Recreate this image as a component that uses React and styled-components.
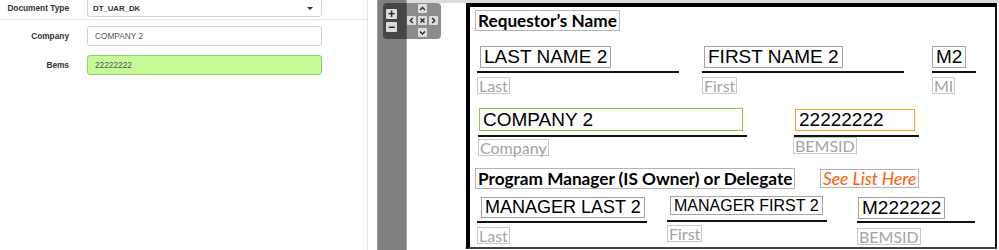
import React from "react";
import styled, { createGlobalStyle } from "styled-components";

const GlobalStyle = createGlobalStyle`
  html, body {
    margin: 0;
    padding: 0;
    background: #fff;
    overflow: hidden;
  }
  body {
    font-family: "Liberation Sans", Arial, sans-serif;
  }
`;

const fields = [
  { x: 7, y: 39, inset: 3, h: 22, line: 202, gap1: 3, gap2: 4, value: "LAST NAME 2", label: "Last" },
  { x: 232, y: 39, inset: 2, h: 22, line: 202, gap1: 3, gap2: 4, value: "FIRST NAME 2", label: "First" },
  { x: 462, y: 39, inset: 0, h: 22, line: 44, gap1: 3, gap2: 4, value: "M2", label: "MI" },
  { x: 8, y: 101, inset: 1, h: 23, w: 264, line: 269, gap1: 4, gap2: 2, value: "COMPANY 2", label: "Company", tone: "green" },
  { x: 324, y: 102, inset: 1, h: 22, w: 120, line: 125, gap1: 4, gap2: 0, labelInset: -1, value: "22222222", label: "BEMSID", tone: "orange" },
  { x: 7, y: 190, inset: 4, h: 21, line: 170, gap1: 3, gap2: 4, size: 18, value: "MANAGER LAST 2", label: "Last" },
  { x: 197, y: 189, inset: 3, h: 19, line: 160, gap1: 5, gap2: 3, size: 16, value: "MANAGER FIRST 2", label: "First" },
  { x: 387, y: 190, inset: 1, h: 22, line: 118, gap1: 2, gap2: 5, value: "M222222", label: "BEMSID" }
];

const toneColor = {
  plain: "#a3a3a3",
  green: "#8cc63f",
  orange: "#f5a21c"
};

function Chevron({ dir }) {
  const paths = {
    up: "M2 6 L4.5 3.5 L7 6",
    down: "M2 3.5 L4.5 6 L7 3.5",
    left: "M5.8 2 L3.3 4.5 L5.8 7",
    right: "M3.2 2 L5.7 4.5 L3.2 7",
    close: "M2.5 2.5 L6.5 6.5 M6.5 2.5 L2.5 6.5"
  };
  return (
    <svg width="9" height="9" viewBox="0 0 9 9">
      <path d={paths[dir]} fill="none" stroke="#2a2a2a" strokeWidth="1.4" />
    </svg>
  );
}

export default function App() {
  return (
    <Shell>
      <GlobalStyle />
      <FormPanel>
        <TopRow>
          <FieldLabel>Document Type</FieldLabel>
          <Select>
            <span>DT_UAR_DK</span>
            <Caret />
          </Select>
        </TopRow>
        <Divider />
        <Row $mt={6}>
          <FieldLabel>Company</FieldLabel>
          <Input>COMPANY 2</Input>
        </Row>
        <Row $mt={9}>
          <FieldLabel>Bems</FieldLabel>
          <Input $valid>22222222</Input>
        </Row>
      </FormPanel>
      <Gutter />
      <ThumbBar />
      <Viewer>
        <Page>
          <Heading $x={5} $y={3}>Requestor’s Name</Heading>
          <Heading $x={5} $y={161}>Program Manager (IS Owner) or Delegate</Heading>
          <Heading $x={350} $y={162} $link>See List Here</Heading>
          {fields.map((f, i) => (
            <FieldGroup key={i} $x={f.x} $y={f.y}>
              <ValueBox
                $inset={f.inset}
                $h={f.h}
                $w={f.w}
                $size={f.size || 19}
                $tone={f.tone || "plain"}
              >
                {f.value}
              </ValueBox>
              <Rule $w={f.line} $gap={f.gap1} />
              <Caption $gap={f.gap2} $inset={f.labelInset || 0}>
                {f.label}
              </Caption>
            </FieldGroup>
          ))}
        </Page>
      </Viewer>
      <NavOverlay>
        <ZoomCol>
          <ZoomBtn>+</ZoomBtn>
          <ZoomBtn>−</ZoomBtn>
        </ZoomCol>
        <ArrowGrid>
          <span />
          <ArrowBtn><Chevron dir="up" /></ArrowBtn>
          <span />
          <ArrowBtn><Chevron dir="left" /></ArrowBtn>
          <ArrowBtn><Chevron dir="close" /></ArrowBtn>
          <ArrowBtn><Chevron dir="right" /></ArrowBtn>
          <span />
          <ArrowBtn><Chevron dir="down" /></ArrowBtn>
          <span />
        </ArrowGrid>
      </NavOverlay>
    </Shell>
  );
}

const Shell = styled.div`
  position: relative;
  display: flex;
  width: 999px;
  height: 250px;
  overflow: hidden;
`;

const FormPanel = styled.div`
  width: 367px;
  flex-shrink: 0;
  border-right: 1px solid #e4e4e4;
  background: #fff;
`;

const TopRow = styled.div`
  display: flex;
  align-items: flex-start;
  height: 19px;
`;

const Row = styled.div`
  display: flex;
  align-items: center;
  height: 20px;
  margin-top: ${p => p.$mt}px;
`;

const FieldLabel = styled.div`
  width: 69px;
  margin-right: 18px;
  text-align: right;
  font-size: 8.3px;
  font-weight: bold;
  line-height: 17px;
  color: #333;
  white-space: nowrap;
`;

const Select = styled.div`
  box-sizing: border-box;
  width: 235px;
  height: 21px;
  margin-top: -4px;
  padding: 3px 8px 0 5px;
  border: 1px solid #d4d4d4;
  border-radius: 3px;
  display: flex;
  align-items: center;
  justify-content: space-between;
  font-size: 7.8px;
  font-weight: bold;
  color: #333;
`;

const Caret = styled.span`
  width: 0;
  height: 0;
  border-left: 3px solid transparent;
  border-right: 3px solid transparent;
  border-top: 3px solid #333;
`;

const Divider = styled.div`
  height: 1px;
  background: #e6e6e6;
`;

const Input = styled.div`
  box-sizing: border-box;
  width: 235px;
  height: 20px;
  padding: 0 7px;
  border: 1px solid ${p => (p.$valid ? "#93cf6b" : "#d0d0d0")};
  border-radius: 3px;
  background: ${p => (p.$valid ? "#c5fa97" : "#fff")};
  display: flex;
  align-items: center;
  font-size: 8.3px;
  color: #555;
`;

const Gutter = styled.div`
  width: 9px;
  flex-shrink: 0;
  background: #fff;
`;

const ThumbBar = styled.div`
  box-sizing: border-box;
  width: 30px;
  flex-shrink: 0;
  background: #808080;
  border-left: 1px solid #9c9c9c;
  border-right: 1px solid #a4a4a4;
`;

const Viewer = styled.div`
  flex: 1;
  border-top: 3px solid #dcdcdc;
  padding-left: 59px;
  background: #fff;
`;

const Page = styled.div`
  position: relative;
  box-sizing: border-box;
  width: 531px;
  height: 246px;
  border-top: 4px solid #000;
  border-left: 4px solid #000;
  border-right: 2px solid #111;
  border-bottom: 2px solid #444;
  background: #fff;
`;

const Heading = styled.div`
  position: absolute;
  left: ${p => p.$x}px;
  top: ${p => p.$y}px;
  box-sizing: border-box;
  height: ${p => (p.$link ? 19 : 21)}px;
  padding: 0 2px;
  border: 1px solid #b4b4b4;
  font-family: Lato, "Open Sans", sans-serif;
  font-size: ${p => (p.$link ? 17.4 : 17.2)}px;
  line-height: ${p => (p.$link ? 17 : 19)}px;
  font-weight: ${p => (p.$link ? 400 : 700)};
  font-style: ${p => (p.$link ? "italic" : "normal")};
  color: ${p => (p.$link ? "#ff5a0a" : "#000")};
  white-space: nowrap;
`;

const FieldGroup = styled.div`
  position: absolute;
  left: ${p => p.$x}px;
  top: ${p => p.$y}px;
  display: flex;
  flex-direction: column;
  align-items: flex-start;
`;

const ValueBox = styled.div`
  box-sizing: border-box;
  margin-left: ${p => p.$inset}px;
  height: ${p => p.$h}px;
  width: ${p => (p.$w ? `${p.$w}px` : "auto")};
  padding: 0 3px;
  border: 1px solid ${p => toneColor[p.$tone]};
  display: flex;
  align-items: center;
  font-family: "Liberation Sans", Arial, sans-serif;
  font-size: ${p => p.$size}px;
  color: #000;
  white-space: nowrap;
`;

const Rule = styled.div`
  margin-top: ${p => p.$gap}px;
  width: ${p => p.$w}px;
  height: 2px;
  background: #111;
`;

const Caption = styled.span`
  box-sizing: border-box;
  margin-top: ${p => p.$gap}px;
  margin-left: ${p => p.$inset}px;
  height: 17px;
  padding: 0 1px;
  border: 1px solid #c8c8c8;
  font-family: Lato, "Open Sans", sans-serif;
  font-size: 16px;
  line-height: 15px;
  color: #a4a4a4;
  white-space: nowrap;
`;

const NavOverlay = styled.div`
  position: absolute;
  left: 383px;
  top: 3px;
  box-sizing: border-box;
  width: 58px;
  height: 36px;
  padding: 1px 3px 0;
  display: flex;
  gap: 10px;
  background: rgba(0, 0, 0, 0.45);
  border-radius: 4px;
`;

const ZoomCol = styled.div`
  display: flex;
  flex-direction: column;
  gap: 3px;
  padding-top: 5px;
`;

const ZoomBtn = styled.div`
  width: 11px;
  height: 10px;
  background: #dcdcdc;
  border-radius: 1px;
  display: flex;
  align-items: center;
  justify-content: center;
  font-size: 12px;
  font-weight: bold;
  line-height: 10px;
  color: #222;
`;

const ArrowGrid = styled.div`
  display: grid;
  grid-template-columns: repeat(3, 9px);
  grid-template-rows: repeat(3, 9px);
  gap: 3px 2px;
`;

const ArrowBtn = styled.div`
  width: 9px;
  height: 9px;
  background: #dcdcdc;
  border-radius: 1px;
  display: flex;
`;
